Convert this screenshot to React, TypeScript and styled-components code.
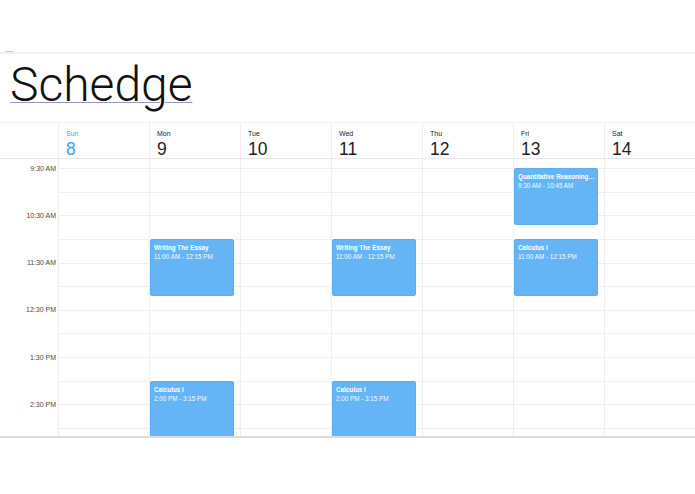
import React from "react";
import styled, { createGlobalStyle } from "styled-components";

const HOUR = 47.2;
const START = 9;

const days = [
  { name: "Sun", date: 8, today: true },
  { name: "Mon", date: 9 },
  { name: "Tue", date: 10 },
  { name: "Wed", date: 11 },
  { name: "Thu", date: 12 },
  { name: "Fri", date: 13 },
  { name: "Sat", date: 14 },
];

type Ev = { day: number; title: string; start: number; end: number; label: string };

const events: Ev[] = [
  { day: 5, title: "Quantitative Reasoning: Math", start: 9.5, end: 10.75, label: "9:30 AM - 10:45 AM" },
  { day: 1, title: "Writing The Essay", start: 11, end: 12.25, label: "11:00 AM - 12:15 PM" },
  { day: 3, title: "Writing The Essay", start: 11, end: 12.25, label: "11:00 AM - 12:15 PM" },
  { day: 5, title: "Calculus I", start: 11, end: 12.25, label: "11:00 AM - 12:15 PM" },
  { day: 1, title: "Calculus I", start: 14, end: 15.25, label: "2:00 PM - 3:15 PM" },
  { day: 3, title: "Calculus I", start: 14, end: 15.25, label: "2:00 PM - 3:15 PM" },
];

// the last hour row is scrolled out of view, so it carries no label
const hourLabels = ["9:30 AM", "10:30 AM", "11:30 AM", "12:30 PM", "1:30 PM", "2:30 PM", ""];
const SLOTS = hourLabels.length * 2;

const Global = createGlobalStyle`
  html, body { margin: 0; padding: 0; background: #fff; }
  body { font-family: "Liberation Sans", Arial, sans-serif; color: #333; }
`;

const Page = styled.div`
  width: 695px;
  height: 494px;
  overflow: hidden;
  background: #fff;
`;

const TopBar = styled.div`
  height: 52px;
  border-bottom: 2px solid #f1f1f1;
  display: flex;
  align-items: flex-end;
  padding-left: 5px;
`;

const Dash = styled.span`
  width: 8px;
  height: 1px;
  background: #c8c8c8;
`;

const TitleRow = styled.div`
  height: 68px;
  padding-left: 10px;
  display: flex;
  align-items: flex-start;
`;

const Title = styled.a`
  font-family: Roboto, "Liberation Sans", sans-serif;
  font-weight: 300;
  font-size: 48px;
  line-height: 60px;
  margin-top: 1px;
  color: #111;
  text-decoration: underline;
  text-decoration-color: #9d92c8;
  text-decoration-thickness: 1px;
  text-underline-offset: 1px;
`;

const Calendar = styled.div`
  height: 313px;
  border-top: 1px solid #f0f0f0;
  border-bottom: 2px solid #dcdcdc;
  display: flex;
  flex-direction: column;
  overflow: hidden;
`;

const Grid = styled.div`
  display: grid;
  grid-template-columns: 58px repeat(7, 91px);
`;

const Header = styled(Grid)`
  height: 35px;
  border-bottom: 1px solid #e6e6e6;
  flex-shrink: 0;
`;

const HeadCell = styled.div<{ $today?: boolean }>`
  border-left: 1px solid #eeeeee;
  padding: 7px 0 0 7px;
  color: ${(p) => (p.$today ? "#4aa0ee" : "#222")};
  &:first-child { border-left: none; }
`;

const DayName = styled.div`
  font-size: 7px;
  line-height: 8px;
`;

const DayNum = styled.div`
  font-size: 17.5px;
  line-height: 20px;
  margin-top: 1px;
`;

const BodyWrap = styled.div`
  flex: 1;
  overflow: hidden;
`;

const Body = styled(Grid)`
  margin-top: -14.3px;
`;

const Gutter = styled.div`
  display: flex;
  flex-direction: column;
`;

const GutterCell = styled.div`
  height: ${HOUR}px;
  display: flex;
  align-items: center;
  justify-content: flex-end;
  padding-right: 2px;
  font-size: 7px;
  color: #4a4a4a;
`;

const DayCol = styled.div`
  position: relative;
  border-left: 1px solid #eeeeee;
  display: flex;
  flex-direction: column;
`;

const Slot = styled.div`
  height: ${HOUR / 2}px;
  box-sizing: border-box;
  border-top: 1px solid #efefef;
`;

const Event = styled.div`
  position: absolute;
  left: 0;
  right: 6px;
  box-sizing: border-box;
  background: #64b4f6;
  border: 1px solid #5aaef2;
  border-radius: 2px;
  padding: 3px 2px 3px 3px;
  color: #fff;
  font-size: 6.3px;
  line-height: 9px;
  overflow: hidden;
`;

const EvTitle = styled.div`
  font-weight: bold;
  white-space: nowrap;
  overflow: hidden;
  text-overflow: ellipsis;
`;

const EvTime = styled.div`
  opacity: 0.95;
`;

export default function App() {
  return (
    <Page>
      <Global />
      <TopBar>
        <Dash />
      </TopBar>
      <TitleRow>
        <Title href="#">Schedge</Title>
      </TitleRow>
      <Calendar>
        <Header>
          <HeadCell />
          {days.map((d) => (
            <HeadCell key={d.name} $today={d.today}>
              <DayName>{d.name}</DayName>
              <DayNum>{d.date}</DayNum>
            </HeadCell>
          ))}
        </Header>
        <BodyWrap>
          <Body>
            <Gutter>
              {hourLabels.map((l, i) => (
                <GutterCell key={i}>{l}</GutterCell>
              ))}
            </Gutter>
            {days.map((d, i) => (
              <DayCol key={d.name}>
                {Array.from({ length: SLOTS }).map((_, s) => (
                  <Slot key={s} />
                ))}
                {events
                  .filter((e) => e.day === i)
                  .map((e) => (
                    <Event
                      key={e.title + e.start}
                      style={{
                        top: (e.start - START) * HOUR,
                        height: (e.end - e.start) * HOUR - 2,
                      }}
                    >
                      <EvTitle>{e.title}</EvTitle>
                      <EvTime>{e.label}</EvTime>
                    </Event>
                  ))}
              </DayCol>
            ))}
          </Body>
        </BodyWrap>
      </Calendar>
    </Page>
  );
}
